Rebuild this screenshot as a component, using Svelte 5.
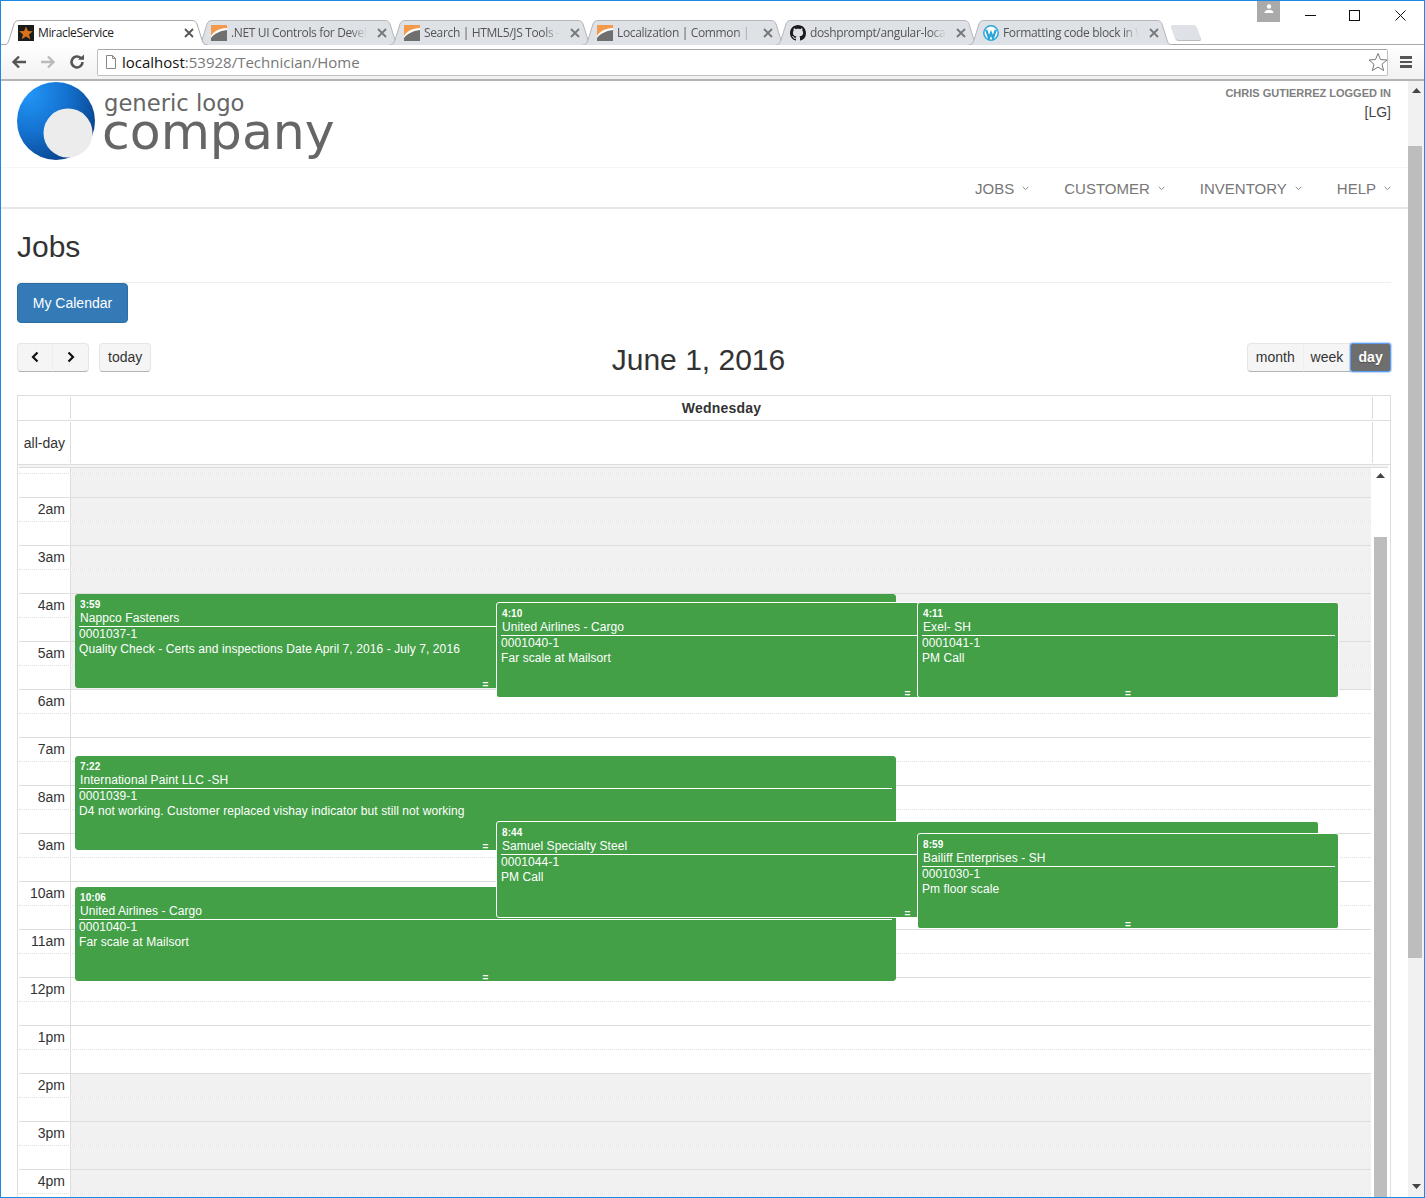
<script>
	const tabs = [
		{ title: 'MiracleService', icon: 'star', active: true },
		{ title: '.NET UI Controls for Developers', icon: 'telerik' },
		{ title: 'Search | HTML5/JS Tools - Telerik', icon: 'telerik' },
		{ title: 'Localization | Common | Help', icon: 'telerik' },
		{ title: 'doshprompt/angular-localization', icon: 'github' },
		{ title: 'Formatting code block in WordPress', icon: 'wp' }
	];

	const menu = ['JOBS', 'CUSTOMER', 'INVENTORY', 'HELP'];

	// half hour rows, first one is the half of 1am cut by the scroller
	const hours = ['2am', '3am', '4am', '5am', '6am', '7am', '8am', '9am', '10am', '11am', '12pm', '1pm', '2pm', '3pm', '4pm'];
	const rows = [{ label: '', major: false, off: true }];
	hours.forEach((label, i) => {
		const off = i < 4 || i >= 12;
		rows.push({ label, major: true, off });
		rows.push({ label: '', major: false, off });
	});

	const events = [
		{ time: '3:59', title: 'Nappco Fasteners', no: '0001037-1', desc: 'Quality Check - Certs and inspections Date April 7, 2016 - July 7, 2016', x: 75, w: 821, y: 594, h: 94 },
		{ time: '7:22', title: 'International Paint LLC -SH', no: '0001039-1', desc: 'D4 not working. Customer replaced vishay indicator but still not working', x: 75, w: 821, y: 756, h: 94 },
		{ time: '10:06', title: 'United Airlines - Cargo', no: '0001040-1', desc: 'Far scale at Mailsort', x: 75, w: 821, y: 887, h: 94 },
		{ time: '4:10', title: 'United Airlines - Cargo', no: '0001040-1', desc: 'Far scale at Mailsort', x: 496, w: 823, y: 602, h: 96, ring: true },
		{ time: '8:44', title: 'Samuel Specialty Steel', no: '0001044-1', desc: 'PM Call', x: 496, w: 823, y: 821, h: 97, ring: true },
		{ time: '4:11', title: 'Exel- SH', no: '0001041-1', desc: 'PM Call', x: 917, w: 422, y: 602, h: 96, ring: true },
		{ time: '8:59', title: 'Bailiff Enterprises - SH', no: '0001030-1', desc: 'Pm floor scale', x: 917, w: 422, y: 833, h: 96, ring: true }
	];
</script>

<div class="window">
	<div class="strip">
		{#each tabs as tab}
			<div class="tab" class:active={tab.active}>
				<svg class="tab-shape" viewBox="0 0 205 25" preserveAspectRatio="none">
					<path d="M0.5 25 C4 25 5 23 6 20 L11 4 C12 1.500 13.500 0.500 16 0.500 H189 C191.500 0.500 193 1.500 194 4 L199 20 C200 23 201 25 204.500 25" />
				</svg>
				<span class="favicon">
					{#if tab.icon === 'star'}
						<svg viewBox="0 0 16 16" width="16" height="16">
							<rect width="16" height="16" fill="#1c1c1c" />
							<path d="M8 1.500 L9.900 6 L14.800 6.300 L11 9.400 L12.300 14.300 L8 11.600 L3.700 14.300 L5 9.400 L1.200 6.300 L6.100 6 Z" fill="#d9731a" />
						</svg>
					{:else if tab.icon === 'telerik'}
						<svg viewBox="0 0 16 16" width="16" height="16">
							<rect width="16" height="16" fill="#f39a4c" />
							<path d="M0 16 V11 C3 6 8 3.500 16 3 V16 Z" fill="#ffffff" />
							<path d="M0 16 V13 C3 9 8 6 16 5 V16 Z" fill="#6f6f6f" />
						</svg>
					{:else if tab.icon === 'github'}
						<svg viewBox="0 0 16 16" width="16" height="16">
							<path fill="#1b1b1b" d="M8 0C3.580 0 0 3.580 0 8c0 3.540 2.290 6.530 5.470 7.590.4.070.55-.17.55-.38 0-.19-.01-.82-.01-1.490-2.010.37-2.530-.49-2.690-.94-.09-.23-.48-.94-.82-1.130-.28-.15-.68-.52-.01-.53.63-.01 1.080.58 1.230.82.72 1.210 1.870.87 2.330.66.07-.52.28-.87.51-1.070-1.780-.2-3.640-.89-3.640-3.950 0-.87.31-1.590.82-2.150-.08-.2-.36-1.020.08-2.120 0 0 .67-.21 2.200.82.64-.18 1.320-.27 2-.27.68 0 1.360.09 2 .27 1.530-1.040 2.200-.82 2.200-.82.44 1.100.16 1.920.08 2.120.51.56.82 1.270.82 2.150 0 3.070-1.870 3.750-3.650 3.950.29.25.54.73.54 1.480 0 1.070-.01 1.930-.01 2.200 0 .21.15.46.55.38A8.013 8.013 0 0016 8c0-4.420-3.580-8-8-8z" />
						</svg>
					{:else}
						<svg viewBox="0 0 16 16" width="16" height="16">
							<circle cx="8" cy="8" r="7.200" fill="#fff" stroke="#2ba5d8" stroke-width="1.500" />
							<path d="M3.200 4.800 L6 13 L8 8 L10 13 L12.800 4.800" fill="none" stroke="#2ba5d8" stroke-width="2.200" />
						</svg>
					{/if}
				</span>
				<span class="tab-title">{tab.title}</span>
				<svg class="tab-close" viewBox="0 0 10 10" width="10" height="10">
					<path d="M1 1 L9 9 M9 1 L1 9" stroke={tab.active ? '#555' : '#777'} stroke-width="1.800" />
				</svg>
			</div>
		{/each}
		<div class="new-tab"></div>
		<div class="controls">
			<div class="avatar">
				<svg viewBox="0 0 12 12" width="12" height="12">
					<circle cx="6" cy="3.500" r="2.200" fill="#fff" />
					<path d="M1.500 10 C1.500 7.500 4 7 6 7 C8 7 10.500 7.500 10.500 10 Z" fill="#fff" />
				</svg>
			</div>
			<svg class="ctl min" viewBox="0 0 11 11" width="11" height="11"><path d="M0 5.500 H11" stroke="#111" /></svg>
			<svg class="ctl max" viewBox="0 0 11 11" width="11" height="11"><rect x="0.500" y="0.500" width="10" height="10" fill="none" stroke="#111" /></svg>
			<svg class="ctl cls" viewBox="0 0 11 11" width="11" height="11"><path d="M0.500 0.500 L10.500 10.500 M10.500 0.500 L0.500 10.500" stroke="#111" /></svg>
		</div>
	</div>

	<div class="toolbar">
		<svg class="tool" viewBox="0 0 16 16" width="16" height="16">
			<path d="M15 8 H3 M8 2.500 L2.500 8 L8 13.500" fill="none" stroke="#555" stroke-width="2.400" />
		</svg>
		<svg class="tool" viewBox="0 0 16 16" width="16" height="16">
			<path d="M1 8 H13 M8 2.500 L13.500 8 L8 13.500" fill="none" stroke="#bbb" stroke-width="2.400" />
		</svg>
		<svg class="tool" viewBox="0 0 16 16" width="16" height="16">
			<path d="M13.500 8 A5.500 5.500 0 1 1 11.800 4" fill="none" stroke="#555" stroke-width="2.600" />
			<path d="M9 5.800 H15 V0.500 Z" fill="#555" />
		</svg>
		<div class="address">
			<svg viewBox="0 0 12 14" width="12" height="14">
				<path d="M1.500 0.500 H7.500 L10.500 3.500 V13.500 H1.500 Z M7.500 0.500 V3.500 H10.500" fill="#fff" stroke="#888" />
			</svg>
			<span class="url"><b>localhost</b>:53928/Technician/Home</span>
			<svg class="star" viewBox="0 0 20 20" width="20" height="20">
				<path d="M10 1.500 L12.500 7.500 L19 8 L14 12.200 L15.600 18.500 L10 15.100 L4.400 18.500 L6 12.200 L1 8 L7.500 7.500 Z" fill="#fff" stroke="#777" />
			</svg>
		</div>
		<div class="burger"><i></i><i></i><i></i></div>
	</div>

	<div class="viewport">
		<div class="page">
			<header class="head">
				<div class="logo">
					<svg viewBox="0 0 78 78" width="78" height="78">
						<defs>
							<radialGradient id="ball" cx="0.150" cy="0.150" r="1">
								<stop offset="0" stop-color="#2196f8" />
								<stop offset="0.500" stop-color="#1471cf" />
								<stop offset="1" stop-color="#083f86" />
							</radialGradient>
						</defs>
						<circle cx="39" cy="39" r="39" fill="url(#ball)" />
						<circle cx="51" cy="51" r="24.500" fill="#ececec" />
					</svg>
					<div class="logo-text">
						<span class="generic">generic logo</span>
						<span class="company">company</span>
					</div>
				</div>
				<div class="user">
					<div class="who">CHRIS GUTIERREZ LOGGED IN</div>
					<div class="lg">[LG]</div>
				</div>
			</header>

			<nav class="menu">
				{#each menu as item}
					<span class="item">
						{item}
						<svg viewBox="0 0 7 5" width="7" height="5"><path d="M0.700 0.800 L3.500 3.600 L6.300 0.800" fill="none" stroke="#888" /></svg>
					</span>
				{/each}
			</nav>

			<h1>Jobs</h1>
			<hr />
			<button class="primary">My Calendar</button>

			<div class="cal-bar">
				<div class="left">
					<div class="group">
						<button class="fc-btn arrow">
							<svg viewBox="0 0 10 12" width="10" height="12"><path d="M7.500 1.500 L3 6 L7.500 10.500" fill="none" stroke="#111" stroke-width="2.200" /></svg>
						</button>
						<button class="fc-btn arrow">
							<svg viewBox="0 0 10 12" width="10" height="12"><path d="M2.500 1.500 L7 6 L2.500 10.500" fill="none" stroke="#111" stroke-width="2.200" /></svg>
						</button>
					</div>
					<button class="fc-btn today">today</button>
				</div>
				<h2>June 1, 2016</h2>
				<div class="group views">
					<button class="fc-btn">month</button>
					<button class="fc-btn">week</button>
					<button class="fc-btn on">day</button>
				</div>
			</div>

			<div class="calendar">
				<div class="head-row">
					<div class="gut"></div>
					<div class="day">Wednesday</div>
					<div class="pad"></div>
				</div>
				<div class="allday-row">
					<div class="gut">all-day</div>
					<div class="day"></div>
					<div class="pad"></div>
				</div>
				<div class="divider"></div>
				<div class="scroller">
					<div class="grid">
						<div class="stub"><div class="gut"></div><div class="slot off"></div></div>
						{#each rows as row}
							<div class="row" class:major={row.major}>
								<div class="gut">{row.label}</div>
								<div class="slot" class:off={row.off}></div>
							</div>
						{/each}
					</div>
					<div class="inner-bar">
						<svg viewBox="0 0 9 5" width="9" height="5"><path d="M0 5 L4.500 0 L9 5 Z" fill="#444" /></svg>
						<div class="inner-thumb"></div>
					</div>
				</div>
			</div>
		</div>

		<div class="page-bar">
			<svg viewBox="0 0 9 5" width="9" height="5"><path d="M0 5 L4.500 0 L9 5 Z" fill="#444" /></svg>
			<div class="page-thumb"></div>
			<svg class="down" viewBox="0 0 9 5" width="9" height="5"><path d="M0 0 L4.500 5 L9 0 Z" fill="#444" /></svg>
		</div>

		{#each events as ev}
			<div class="event" class:ring={ev.ring} style:left="{ev.x - 1}px" style:top="{ev.y - 81}px" style:width="{ev.w}px" style:height="{ev.h}px">
				<div class="ev-time">{ev.time}</div>
				<div class="ev-title">{ev.title}</div>
				<div class="ev-no">{ev.no}</div>
				<div class="ev-desc">{ev.desc}</div>
				<div class="ev-grip">=</div>
			</div>
		{/each}
	</div>
</div>

<style>
	:global(body) {
		margin: 0;
		background: #fff;
		overflow: hidden;
	}

	.window {
		box-sizing: border-box;
		width: 1425px;
		height: 1198px;
		display: flex;
		flex-direction: column;
		border: 1px solid #1e88e5;
		background: #fff;
		font-family: 'Liberation Sans', Arial, sans-serif;
		font-size: 14px;
		color: #333;
		overflow: hidden;
	}

	.strip {
		height: 43px;
		display: flex;
		padding-left: 2px;
		border-bottom: 1px solid #a9a9a9;
		flex-shrink: 0;
	}

	.tab {
		position: relative;
		box-sizing: border-box;
		width: 205px;
		height: 25px;
		margin: 19px -12px 0 0;
		padding-left: 15px;
		display: flex;
		align-items: center;
		font-family: 'Open Sans', sans-serif;
		font-size: 12px;
		letter-spacing: -0.35px;
		color: #555;
	}

	.tab.active {
		z-index: 2;
		color: #222;
	}

	.tab-shape {
		position: absolute;
		left: 0;
		top: 0;
		width: 205px;
		height: 25px;
		fill: #dee1e6;
		stroke: #b4b6ba;
	}

	.active .tab-shape {
		fill: #fff;
		stroke: #a9a9a9;
	}

	.favicon {
		position: relative;
		width: 16px;
		height: 16px;
		margin-right: 4px;
		flex-shrink: 0;
	}

	.favicon svg {
		display: block;
	}

	.tab-title {
		position: relative;
		width: 136px;
		white-space: nowrap;
		overflow: hidden;
		-webkit-mask-image: linear-gradient(to right, #000 88%, transparent);
		mask-image: linear-gradient(to right, #000 88%, transparent);
	}

	.active .tab-title {
		-webkit-mask-image: none;
		mask-image: none;
	}

	.tab-close {
		position: relative;
		margin-left: 10px;
		flex-shrink: 0;
	}

	.new-tab {
		width: 26px;
		height: 15px;
		margin: 24px 0 0 12px;
		background: #dee1e6;
		border-bottom: 1px solid #bbb;
		border-radius: 3px;
		transform: skewX(20deg);
	}

	.controls {
		margin-left: auto;
		display: flex;
		align-items: flex-start;
	}

	.avatar {
		width: 23px;
		height: 21px;
		background: #aaa;
		display: flex;
		justify-content: center;
		padding-top: 2px;
		box-sizing: border-box;
	}

	.ctl {
		margin-top: 9px;
	}

	.min {
		margin-left: 25px;
	}

	.max {
		margin-left: 33px;
	}

	.cls {
		margin-left: 35px;
		margin-right: 18px;
	}

	.toolbar {
		height: 34px;
		display: flex;
		align-items: center;
		padding-left: 10px;
		border-bottom: 2px solid #b3b3b3;
		background: linear-gradient(#fff, #f1f1f1);
		flex-shrink: 0;
	}

	.tool {
		margin-right: 13px;
		flex-shrink: 0;
	}

	.address {
		box-sizing: border-box;
		width: 1291px;
		height: 27px;
		margin-left: -1px;
		display: flex;
		align-items: center;
		padding-left: 7px;
		background: #fff;
		border: 1px solid #c0c0c0;
		border-top-color: #a8a8a8;
		border-radius: 2px;
	}

	.url {
		margin-left: 5px;
		font-family: 'Open Sans', sans-serif;
		font-size: 15px;
		color: #777;
	}

	.url b {
		font-weight: 400;
		color: #111;
	}

	.star {
		margin-left: auto;
		margin-right: -1px;
	}

	.burger {
		margin-left: 12px;
		width: 12px;
		display: flex;
		flex-direction: column;
		gap: 2px;
	}

	.burger i {
		height: 2.500px;
		background: #555;
	}

	.viewport {
		position: relative;
		flex: 1;
		display: flex;
		min-height: 0;
		overflow: hidden;
	}

	.page {
		flex: 1;
		min-width: 0;
		padding: 0 17px 0 16px;
		box-sizing: border-box;
		display: flex;
		flex-direction: column;
	}

	.head {
		height: 86px;
		margin: 0 -17px 0 -16px;
		padding: 0 17px 0 16px;
		display: flex;
		justify-content: space-between;
		border-bottom: 1px solid #f6f6f6;
		flex-shrink: 0;
	}

	.logo {
		display: flex;
		margin-top: 1px;
		height: 78px;
	}

	.logo svg {
		display: block;
	}

	.logo-text {
		margin-left: 9px;
		display: flex;
		flex-direction: column;
		font-family: 'DejaVu Sans', sans-serif;
		color: #666;
	}

	.generic {
		font-size: 22.700px;
		line-height: 26px;
		margin-top: 8px;
	}

	.company {
		font-size: 50.500px;
		line-height: 50px;
		margin-top: -9px;
		margin-left: -2px;
	}

	.user {
		text-align: right;
	}

	.who {
		margin-top: 6px;
		font-size: 11px;
		font-weight: 700;
		color: #808080;
		line-height: 13px;
	}

	.lg {
		margin-top: 4px;
		font-size: 14px;
		line-height: 16px;
		color: #444;
	}

	.menu {
		height: 38px;
		margin: 0 -17px 0 -16px;
		padding: 1px 17px 0 0;
		display: flex;
		justify-content: flex-end;
		align-items: center;
		gap: 35px;
		border-bottom: 2px solid #e7e7e7;
		flex-shrink: 0;
	}

	.item {
		display: flex;
		align-items: center;
		gap: 8px;
		font-size: 15px;
		color: #777;
	}

	h1 {
		margin: 21px 0 0;
		font-size: 30px;
		font-weight: 400;
		line-height: 34px;
		color: #333;
	}

	hr {
		width: 100%;
		margin: 18px 0 0;
		border: 0;
		border-top: 1px solid #eee;
	}

	.primary {
		align-self: flex-start;
		width: 111px;
		height: 40px;
		padding: 0 14px;
		margin-top: 0;
		border: 1px solid #2e6da4;
		border-radius: 4px;
		background: #337ab7;
		color: #fff;
		font: inherit;
	}

	.cal-bar {
		margin-top: 20px;
		height: 52px;
		display: flex;
		justify-content: space-between;
		align-items: flex-start;
		flex-shrink: 0;
	}

	.left {
		display: flex;
		gap: 10px;
		width: 300px;
	}

	.group {
		display: flex;
	}

	.views {
		width: 144px;
		justify-content: flex-end;
	}

	h2 {
		margin: 0 0 0 -167px;
		font-size: 30px;
		font-weight: 400;
		line-height: 34px;
		color: #333;
	}

	.fc-btn {
		height: 29px;
		padding: 0 8px 2px;
		background: #f5f5f5;
		border: 1px solid #e6e6e6;
		border-bottom-color: #b3b3b3;
		border-radius: 4px;
		font: inherit;
		color: #333;
	}

	.group .fc-btn {
		border-radius: 0;
		margin-left: -1px;
		border-left-color: #efefef;
	}

	.group .fc-btn:first-child {
		border-radius: 4px 0 0 4px;
		margin-left: 0;
		border-left-color: #e6e6e6;
	}

	.group .fc-btn:last-child {
		border-radius: 0 4px 4px 0;
	}

	.arrow {
		width: 36px;
		display: flex;
		align-items: center;
		justify-content: center;
	}

	.arrow:last-child {
		width: 37px;
	}

	.views .fc-btn {
		padding: 0 7px 2px;
	}

	.views .fc-btn:first-child {
		width: 57px;
	}

	.views .fc-btn:nth-child(2) {
		width: 49px;
	}

	.group .fc-btn.on {
		width: 41px;
		background: #6e6e6e;
		border: 1px solid #5b9bf0;
		border-radius: 3px;
		box-shadow: 0 0 1px 1px rgba(91, 155, 240, 0.4);
		color: #fff;
		font-weight: 700;
		text-shadow: 0 1px 1px rgba(0, 0, 0, 0.3);
	}

	.calendar {
		flex: 1;
		min-height: 0;
		display: flex;
		flex-direction: column;
		border: 1px solid #ddd;
		border-bottom: 0;
	}

	.head-row,
	.allday-row {
		display: flex;
		flex-shrink: 0;
		border-bottom: 1px solid #ddd;
	}

	.head-row {
		height: 24px;
	}

	.allday-row {
		height: 43px;
	}

	.head-row .gut,
	.allday-row .gut {
		box-sizing: border-box;
		width: 53px;
		border-right: 1px solid #ddd;
		margin: 1px 0;
		text-align: right;
		padding-right: 5px;
		line-height: 43px;
	}

	.head-row .day {
		flex: 1;
		text-align: center;
		font-weight: 700;
		font-size: 14px;
		letter-spacing: 0.2px;
		line-height: 24px;
	}

	.allday-row .day {
		flex: 1;
	}

	.pad {
		width: 17px;
		margin: 1px 0;
		border-left: 1px solid #ddd;
	}

	.divider {
		height: 2px;
		margin-left: 1px;
		margin-right: 2px;
		background: #f4f4f4;
		border-bottom: 1px solid #ddd;
		flex-shrink: 0;
	}

	.scroller {
		flex: 1;
		min-height: 0;
		display: flex;
		overflow: hidden;
	}

	.grid {
		flex: 1;
		min-width: 0;
	}

	.stub {
		height: 5px;
		display: flex;
		margin-left: 1px;
	}

	.row {
		box-sizing: border-box;
		height: 24px;
		display: flex;
		margin-left: 1px;
		border-top: 1px dotted #ddd;
	}

	.row.major {
		border-top: 1px solid #ddd;
	}

	.row .gut,
	.stub .gut {
		box-sizing: border-box;
		width: 52px;
		flex-shrink: 0;
		border-right: 1px solid #ddd;
		padding-right: 5px;
		text-align: right;
		line-height: 23px;
		color: #333;
	}

	.slot {
		flex: 1;
	}

	.slot.off {
		background: #f1f1f1;
	}

	.inner-bar {
		width: 19px;
		flex-shrink: 0;
		padding: 5px 0 0 3px;
		box-sizing: border-box;
		display: flex;
		flex-direction: column;
		align-items: flex-start;
	}

	.inner-bar svg {
		margin-left: 2px;
		flex-shrink: 0;
	}

	.inner-thumb {
		width: 13px;
		margin-top: 59px;
		height: 700px;
		flex-shrink: 0;
		background: #bdbdbd;
	}

	.page-bar {
		width: 16px;
		flex-shrink: 0;
		background: #f1f1f1;
		display: flex;
		flex-direction: column;
		align-items: center;
		padding-top: 7px;
		box-sizing: border-box;
	}

	.page-thumb {
		width: 14px;
		height: 812px;
		margin-top: 53px;
		align-self: flex-start;
		flex-shrink: 0;
		background: #bdbdbd;
	}

	.down {
		margin-top: auto;
		margin-bottom: 8px;
	}

	.event {
		position: absolute;
		box-sizing: border-box;
		padding: 4px 3px 0;
		background: #43a047;
		border: 1px solid #43a047;
		border-radius: 3px;
		color: #fff;
		font-size: 12px;
		letter-spacing: 0.085px;
		overflow: hidden;
	}

	.event.ring {
		padding: 5px 3px 0 4px;
		border-color: #fff;
	}

	.ev-time {
		padding-left: 1px;
		font-size: 10px;
		font-weight: 700;
		line-height: 12px;
	}

	.ev-title {
		padding-left: 1px;
		line-height: 14px;
		border-bottom: 1px solid #fff;
		padding-bottom: 1px;
	}

	.ev-no {
		line-height: 15px;
		margin-top: 0;
	}

	.ev-desc {
		line-height: 15px;
	}

	.ev-grip {
		position: absolute;
		left: 0;
		right: 0;
		bottom: -3px;
		text-align: center;
		font-size: 10px;
		font-weight: 700;
		line-height: 10px;
	}

	.ring .ev-grip {
		bottom: -2px;
	}
</style>
